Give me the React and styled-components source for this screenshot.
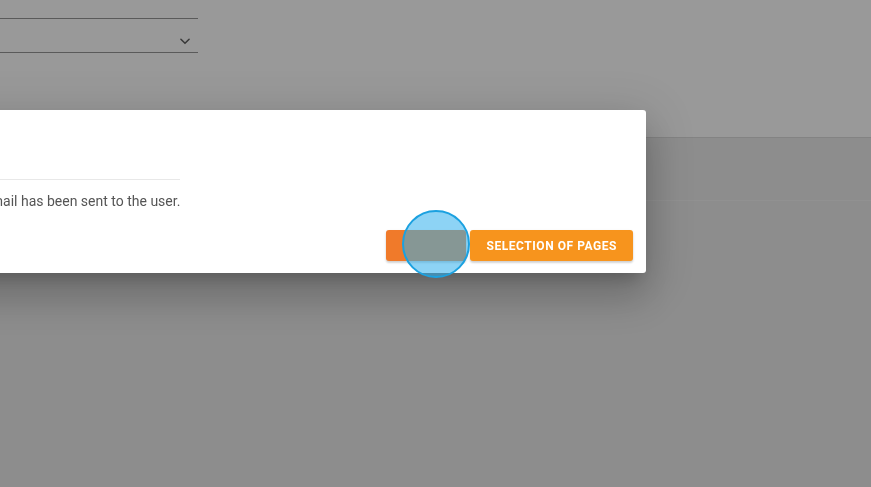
import React from 'react';
import styled, { createGlobalStyle } from 'styled-components';

const GlobalStyle = createGlobalStyle`
  html, body {
    margin: 0;
    padding: 0;
    overflow: hidden;
  }
  body {
    font-family: Roboto, "Liberation Sans", Arial, sans-serif;
    background: #ebebeb;
  }
`;

const Page = styled.div`
  width: 871px;
  height: 487px;
  background: #ebebeb;
  display: flex;
  flex-direction: column;
`;

const Header = styled.header`
  height: 137px;
  background: #ffffff;
  border-bottom: 1px solid #dadada;
  display: flex;
  flex-direction: column;
`;

const Field = styled.div`
  width: 198px;
  height: ${p => p.height}px;
  border-bottom: 1px solid #969696;
  display: flex;
  align-items: flex-end;
  justify-content: flex-end;
  box-sizing: border-box;
  padding: 0 6px 4px 0;
`;

const Chevron = styled.svg`
  width: 14px;
  height: 14px;
  color: #5e5e5e;
`;

const TabBar = styled.div`
  height: 62px;
  border-bottom: 1px solid #f2f2f2;
`;

const Overlay = styled.div`
  position: fixed;
  inset: 0;
  background: rgba(0, 0, 0, 0.4);
`;

const Dialog = styled.div`
  position: absolute;
  top: 110px;
  left: -61px;
  width: 707px;
  height: 163px;
  background: #ffffff;
  border-radius: 3px;
  box-sizing: border-box;
  padding: 69px 13px 12px 24px;
  display: flex;
  flex-direction: column;
  box-shadow: 0 11px 15px -7px rgba(0, 0, 0, 0.2),
    0 24px 38px 3px rgba(0, 0, 0, 0.14),
    0 9px 46px 8px rgba(0, 0, 0, 0.12);
`;

const Body = styled.div`
  display: inline-flex;
  flex-direction: column;
  align-self: flex-start;
`;

const Divider = styled.hr`
  margin: 0;
  border: none;
  border-top: 1px solid #e8e8e8;
  width: 100%;
`;

const Message = styled.p`
  margin: 13px 0 0;
  font-size: 14px;
  line-height: 16px;
  color: #555555;
  white-space: nowrap;
`;

const Actions = styled.div`
  margin-top: 21px;
  display: flex;
  justify-content: flex-end;
  gap: 4px;
`;

const Button = styled.button`
  height: 31px;
  min-width: ${p => p.minWidth || 64}px;
  padding: 0 16px;
  border: none;
  border-radius: 3px;
  background: ${p => p.bg};
  color: #ffffff;
  font-family: Roboto, "Liberation Sans", Arial, sans-serif;
  font-size: 12px;
  font-weight: 700;
  letter-spacing: 0.55px;
  box-shadow: 0 2px 2px rgba(0, 0, 0, 0.12), 0 1px 3px rgba(0, 0, 0, 0.1);
  cursor: pointer;
`;

const ClickMark = styled.div`
  position: absolute;
  left: 402px;
  top: 210px;
  width: 64px;
  height: 64px;
  border-radius: 50%;
  border: 2px solid #1ba1e0;
  background: rgba(48, 175, 237, 0.55);
`;

export default function App() {
  return (
    <>
      <GlobalStyle />
      <Page>
        <Header>
          <Field height={19} />
          <Field height={34}>
            <Chevron viewBox="0 0 24 24" fill="none" stroke="currentColor" strokeWidth="2.6" strokeLinecap="round" strokeLinejoin="round">
              <path d="M5 9l7 7 7-7" />
            </Chevron>
          </Field>
        </Header>
        <TabBar />
      </Page>
      <Overlay />
      <Dialog role="dialog">
        <Body>
          <Divider />
          <Message>An email has been sent to the user.</Message>
        </Body>
        <Actions>
          <Button bg="#f07a2a" minWidth={80} aria-label="Confirm" />
          <Button bg="#f7941d">SELECTION OF PAGES</Button>
        </Actions>
      </Dialog>
      <ClickMark />
    </>
  );
}
